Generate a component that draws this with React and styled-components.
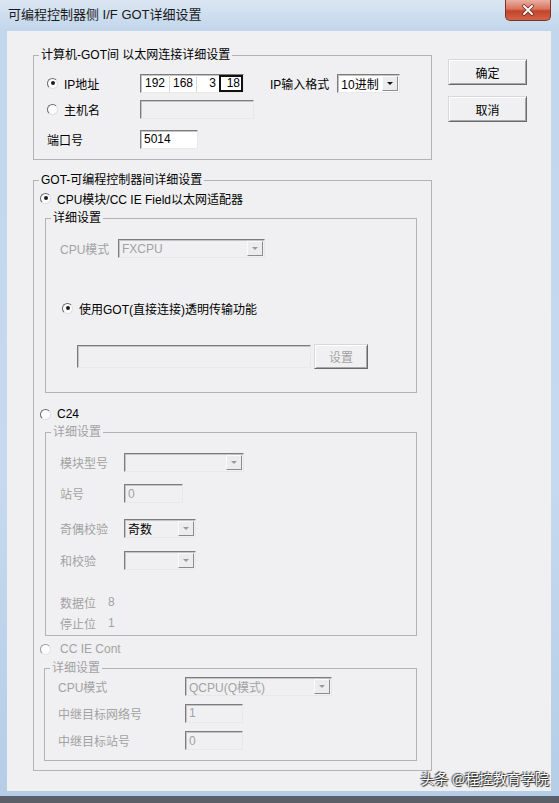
import React from 'react';
import styled, { createGlobalStyle } from 'styled-components';

const GlobalStyle = createGlobalStyle`
  html, body { margin: 0; padding: 0; }
  body {
    width: 559px;
    height: 803px;
    overflow: hidden;
    font-family: "Liberation Sans", "Noto Sans CJK SC", sans-serif;
    font-size: 12px;
  }
  * { box-sizing: border-box; }
`;

const Frame = styled.div`
  position: relative;
  width: 559px;
  height: 803px;
  display: flex;
  flex-direction: column;
  background: linear-gradient(180deg, #dbe6f2 0px, #c2d6ec 30px, #c6d9ee 60%, #b5cde7 100%);
  border-bottom: 7px solid #5b6068;
`;

const TitleBar = styled.div`
  height: 31px;
  display: flex;
  justify-content: space-between;
  align-items: flex-start;
  padding-left: 8px;
`;

const Title = styled.div`
  margin-top: 7px;
  font-size: 13px;
  line-height: 16px;
  color: #1a1a1a;
`;

const CloseButton = styled.div`
  width: 46px;
  height: 21px;
  margin-right: 8px;
  display: flex;
  align-items: center;
  justify-content: center;
  border: 1px solid #7b3526;
  border-top: none;
  border-radius: 0 0 5px 5px;
  background: linear-gradient(180deg, #eab0a2 0%, #d9735c 45%, #c2442b 55%, #d0644a 100%);
`;

const Client = styled.div`
  flex: 1;
  margin: 0 8px 5px 7px;
  background: #f0f0f2;
  display: flex;
  gap: 16px;
  padding: 16px 0 0 26px;
`;

const LeftColumn = styled.div`
  width: 399px;
  display: flex;
  flex-direction: column;
`;

const RightColumn = styled.div`
  display: flex;
  flex-direction: column;
  gap: 11px;
  padding-top: 12px;
`;

const Group = styled.fieldset`
  margin: ${p => p.$mt || 0}px 0 0 ${p => p.$ml || 0}px;
  padding: 0;
  min-width: 0;
  border: 1px solid #b3b3b3;
`;

const Legend = styled.legend`
  margin-left: 5px;
  padding: 0 2px;
  height: 16px;
  line-height: 16px;
  color: ${p => (p.$disabled ? '#a2a2a2' : '#000')};
`;

const GroupBody = styled.div`
  display: flex;
  flex-direction: column;
  padding: ${p => p.$pad};
`;

const Row = styled.div`
  display: flex;
  align-items: center;
  height: ${p => p.$h || 20}px;
  margin-top: ${p => p.$mt || 0}px;
  padding-left: ${p => p.$pl || 0}px;
`;

const LabelCell = styled.div`
  width: ${p => p.$w}px;
  flex-shrink: 0;
  display: flex;
  align-items: center;
  color: ${p => (p.$disabled ? '#a2a2a2' : '#000')};
`;

const Text = styled.span`
  margin-left: ${p => p.$ml || 0}px;
  color: ${p => (p.$disabled ? '#a2a2a2' : '#000')};
  white-space: nowrap;
`;

const RadioRow = styled.div`
  display: flex;
  align-items: center;
  gap: ${p => p.$gap || 6}px;
  height: 16px;
  flex-shrink: 0;
  margin-top: ${p => p.$mt || 0}px;
  padding-left: ${p => p.$pl || 0}px;
  color: ${p => (p.$disabled ? '#a2a2a2' : '#000')};
  white-space: nowrap;
`;

const RadioDot = styled.span`
  width: 11px;
  height: 11px;
  border-radius: 50%;
  border: 1px solid;
  border-color: ${p => (p.$disabled ? '#9a9a9a #e4e4e4 #e4e4e4 #9a9a9a' : '#6a6a6a #e0e0e0 #e0e0e0 #6a6a6a')};
  background: #fdfdfd;
  display: flex;
  align-items: center;
  justify-content: center;
  &::after {
    content: '';
    width: 4px;
    height: 4px;
    border-radius: 50%;
    background: ${p => (p.$checked ? '#1c1c1c' : 'transparent')};
  }
`;

const Sunken = styled.div`
  width: ${p => p.$w}px;
  height: ${p => p.$h || 19}px;
  margin-left: ${p => p.$ml || 0}px;
  flex-shrink: 0;
  display: flex;
  align-items: stretch;
  border: 1px solid;
  border-color: #7c7c7c #e8e8e8 #e8e8e8 #7c7c7c;
  box-shadow: inset 1px 1px 0 #c4c4c4;
  background: ${p => (p.$disabled ? '#f0f0f2' : '#fff')};
  color: ${p => (p.$dim ? '#a2a2a2' : '#000')};
`;

const FieldText = styled.span`
  flex: 1;
  padding-left: 3px;
  display: flex;
  align-items: center;
  white-space: nowrap;
`;

const DropButton = styled.span`
  width: 16px;
  margin: 1px;
  display: flex;
  align-items: center;
  justify-content: center;
  border: 1px solid;
  border-color: #fafafa #8c8c8c #8c8c8c #fafafa;
  background: #ececee;
  &::after {
    content: '';
    border-left: 3px solid transparent;
    border-right: 3px solid transparent;
    border-top: 3px solid ${p => (p.$dim ? '#9a9a9a' : '#111')};
  }
`;

const IpSegment = styled.span`
  width: ${p => p.$w}px;
  display: flex;
  align-items: center;
  justify-content: ${p => (p.$right ? 'flex-end' : 'center')};
  padding-right: ${p => (p.$right ? 3 : 0)}px;
  border-left: ${p => (p.$sep ? '1px solid #d8d8d8' : 'none')};
  outline: ${p => (p.$focus ? '2px solid #111' : 'none')};
  outline-offset: -2px;
`;

const PushButton = styled.button`
  width: ${p => p.$w}px;
  height: ${p => p.$h}px;
  margin-left: ${p => p.$ml || 0}px;
  padding: 0;
  font: inherit;
  color: ${p => (p.$disabled ? '#a2a2a2' : '#000')};
  background: #f0f0f2;
  border: 1px solid;
  border-color: #d8d8d8 #6a6a6a #6a6a6a #d8d8d8;
  box-shadow: inset 1px 1px 0 #fff, inset -1px -1px 0 #a8a8a8;
  border-radius: 0;
`;

const Watermark = styled.div`
  position: absolute;
  right: 10px;
  bottom: 8px;
  font-family: "Noto Sans CJK SC", sans-serif;
  font-size: 14px;
  line-height: 20px;
  color: #fff;
  text-shadow: 0 0 1px #222, 1px 1px 1px #222, -1px -1px 1px #444;
`;

const Radio = ({ checked, disabled, mt, pl, gap, children }) => (
  <RadioRow $mt={mt} $pl={pl} $gap={gap} $disabled={disabled}>
    <RadioDot $checked={checked} $disabled={disabled} />
    {children}
  </RadioRow>
);

const Select = ({ w, h, ml, disabled, dim, children }) => (
  <Sunken $w={w} $h={h} $ml={ml} $disabled={disabled} $dim={dim}>
    <FieldText>{children}</FieldText>
    <DropButton $dim={disabled} />
  </Sunken>
);

const Input = ({ w, h, ml, disabled, children }) => (
  <Sunken $w={w} $h={h} $ml={ml} $disabled={disabled} $dim={disabled}>
    <FieldText>{children}</FieldText>
  </Sunken>
);

const App = () => (
  <Frame>
    <GlobalStyle />
    <TitleBar>
      <Title>可编程控制器侧 I/F GOT详细设置</Title>
      <CloseButton>
        <svg width="14" height="12" viewBox="0 0 14 12">
          <path d="M3 2 L11 10 M11 2 L3 10" stroke="#6b2416" strokeWidth="3.4" strokeLinecap="round" />
          <path d="M3 2 L11 10 M11 2 L3 10" stroke="#fff" strokeWidth="2" strokeLinecap="round" />
        </svg>
      </CloseButton>
    </TitleBar>

    <Client>
      <LeftColumn>
        <Group>
          <Legend>计算机-GOT间 以太网连接详细设置</Legend>
          <GroupBody $pad="10px 0 10px 13px">
            <Row>
              <LabelCell $w={93}>
                <Radio checked>IP地址</Radio>
              </LabelCell>
              <Sunken $w={104} $h={19}>
                <IpSegment $w={28}>192</IpSegment>
                <IpSegment $w={27} $sep>168</IpSegment>
                <IpSegment $w={23} $sep $right>3</IpSegment>
                <IpSegment $w={24} $right $focus>18</IpSegment>
              </Sunken>
              <Text $ml={26}>IP输入格式</Text>
              <Select w={63} ml={8}>10进制</Select>
            </Row>
            <Row $mt={6}>
              <LabelCell $w={93}>
                <Radio>主机名</Radio>
              </LabelCell>
              <Input w={114} disabled />
            </Row>
            <Row $mt={10}>
              <LabelCell $w={93}>端口号</LabelCell>
              <Input w={58}>5014</Input>
            </Row>
          </GroupBody>
        </Group>

        <Group $mt={12}>
          <Legend>GOT-可编程控制器间详细设置</Legend>
          <GroupBody $pad="2px 14px 9px 6px">
            <Radio checked>CPU模块/CC IE Field以太网适配器</Radio>

            <Group $mt={4} $ml={5}>
              <Legend>详细设置</Legend>
              <GroupBody $pad="13px 0 23px 14px">
                <Row $h={19}>
                  <LabelCell $w={58} $disabled>CPU模式</LabelCell>
                  <Select w={147} disabled dim>FXCPU</Select>
                </Row>
                <Radio checked mt={42} pl={2}>使用GOT(直接连接)透明传输功能</Radio>
                <Row $h={25} $mt={28} $pl={17}>
                  <Input w={234} h={23} disabled />
                  <PushButton $w={54} $h={25} $ml={3} $disabled>设置</PushButton>
                </Row>
              </GroupBody>
            </Group>

            <Radio mt={13}>C24</Radio>

            <Group $mt={2} $ml={5}>
              <Legend $disabled>详细设置</Legend>
              <GroupBody $pad="13px 0 4px 14px">
                <Row $h={19}>
                  <LabelCell $w={64} $disabled>模块型号</LabelCell>
                  <Select w={120} disabled />
                </Row>
                <Row $h={19} $mt={12}>
                  <LabelCell $w={64} $disabled>站号</LabelCell>
                  <Input w={59} disabled>0</Input>
                </Row>
                <Row $h={19} $mt={16}>
                  <LabelCell $w={64} $disabled>奇偶校验</LabelCell>
                  <Select w={72} disabled>奇数</Select>
                </Row>
                <Row $h={19} $mt={13}>
                  <LabelCell $w={64} $disabled>和校验</LabelCell>
                  <Select w={72} disabled />
                </Row>
                <Row $h={16} $mt={24}>
                  <LabelCell $w={48} $disabled>数据位</LabelCell>
                  <Text $disabled>8</Text>
                </Row>
                <Row $h={16} $mt={5}>
                  <LabelCell $w={48} $disabled>停止位</LabelCell>
                  <Text $disabled>1</Text>
                </Row>
              </GroupBody>
            </Group>

            <Radio mt={5} gap={9} disabled>CC IE Cont</Radio>

            <Group $mt={3} $ml={4}>
              <Legend $disabled>详细设置</Legend>
              <GroupBody $pad="1px 0 10px 13px">
                <Row $h={19}>
                  <LabelCell $w={127} $disabled>CPU模式</LabelCell>
                  <Select w={147} disabled dim>QCPU(Q模式)</Select>
                </Row>
                <Row $mt={7}>
                  <LabelCell $w={127} $disabled>中继目标网络号</LabelCell>
                  <Input w={58} disabled>1</Input>
                </Row>
                <Row $h={19} $mt={8}>
                  <LabelCell $w={127} $disabled>中继目标站号</LabelCell>
                  <Input w={58} disabled>0</Input>
                </Row>
              </GroupBody>
            </Group>
          </GroupBody>
        </Group>
      </LeftColumn>

      <RightColumn>
        <PushButton $w={79} $h={26}>确定</PushButton>
        <PushButton $w={79} $h={26}>取消</PushButton>
      </RightColumn>
    </Client>

    <Watermark>头条 @程控教育学院</Watermark>
  </Frame>
);

export default App;
